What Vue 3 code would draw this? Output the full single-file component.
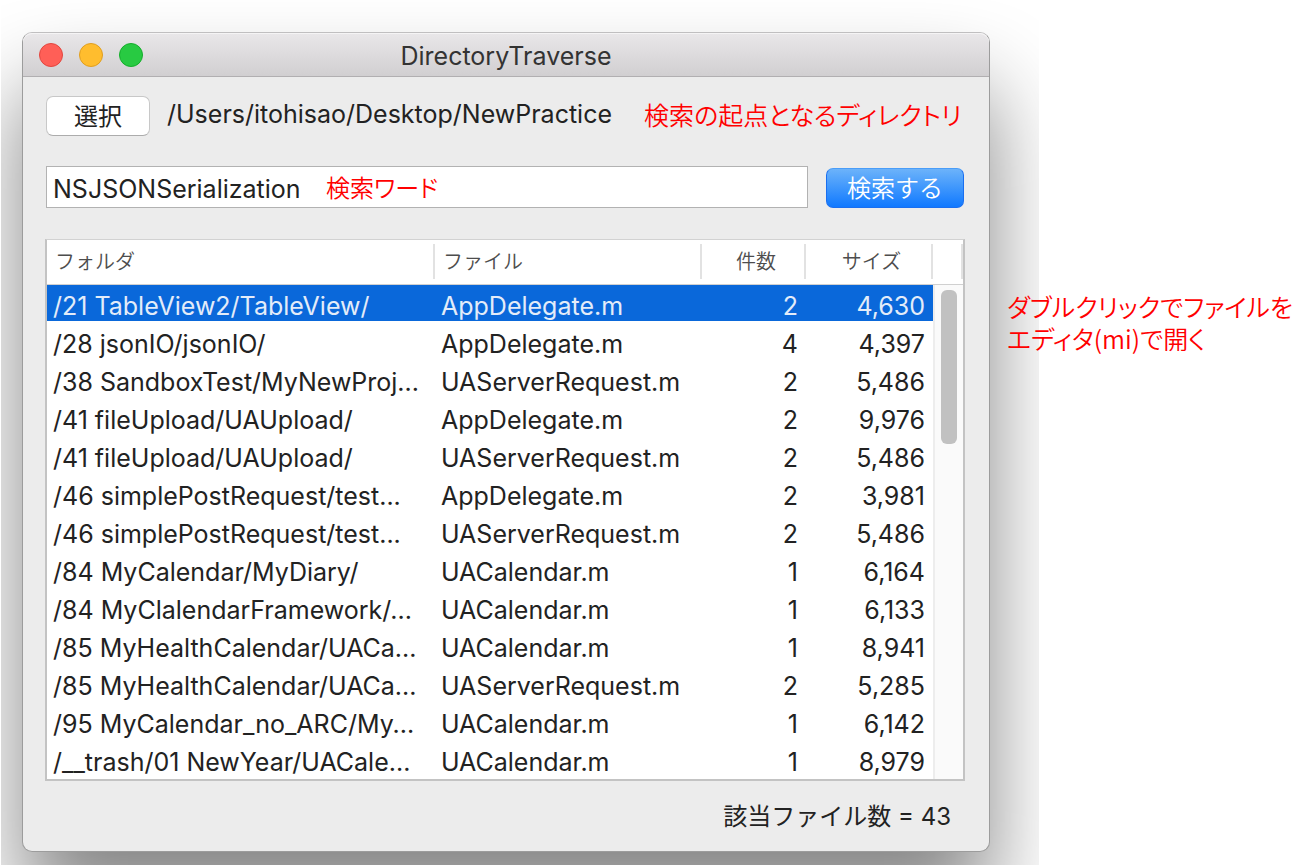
<script setup>
import { ref } from 'vue'

const keyword = ref('NSJSONSerialization')
const selected = ref(0)
const rows = [
  ['/21 TableView2/TableView/', 'AppDelegate.m', '2', '4,630'],
  ['/28 jsonIO/jsonIO/', 'AppDelegate.m', '4', '4,397'],
  ['/38 SandboxTest/MyNewProj...', 'UAServerRequest.m', '2', '5,486'],
  ['/41 fileUpload/UAUpload/', 'AppDelegate.m', '2', '9,976'],
  ['/41 fileUpload/UAUpload/', 'UAServerRequest.m', '2', '5,486'],
  ['/46 simplePostRequest/test...', 'AppDelegate.m', '2', '3,981'],
  ['/46 simplePostRequest/test...', 'UAServerRequest.m', '2', '5,486'],
  ['/84 MyCalendar/MyDiary/', 'UACalendar.m', '1', '6,164'],
  ['/84 MyClalendarFramework/...', 'UACalendar.m', '1', '6,133'],
  ['/85 MyHealthCalendar/UACa...', 'UACalendar.m', '1', '8,941'],
  ['/85 MyHealthCalendar/UACa...', 'UAServerRequest.m', '2', '5,285'],
  ['/95 MyCalendar_no_ARC/My...', 'UACalendar.m', '1', '6,142'],
  ['/__trash/01 NewYear/UACale...', 'UACalendar.m', '1', '8,979'],
]
</script>

<template>
  <div class="page">
    <div class="backdrop">
      <main class="window">
        <header class="titlebar">
          <div class="lights">
            <button class="light red" type="button" aria-label="閉じる"></button>
            <button class="light yellow" type="button" aria-label="しまう"></button>
            <button class="light green" type="button" aria-label="拡大"></button>
          </div>
          <h1>DirectoryTraverse</h1>
        </header>
        <div class="content">
          <div class="source">
            <button class="btn choose" type="button">選択</button>
            <span class="path">/Users/itohisao/Desktop/NewPractice</span>
            <span class="note">検索の起点となるディレクトリ</span>
          </div>
          <form class="search" @submit.prevent>
            <div class="field">
              <input id="keyword" v-model="keyword" type="text" />
              <label class="note hint" for="keyword">検索ワード</label>
            </div>
            <button class="btn primary" type="submit">検索する</button>
          </form>
          <div class="list">
            <table>
              <colgroup>
                <col />
                <col class="c-file" />
                <col class="c-count" />
                <col class="c-size" />
              </colgroup>
              <thead>
                <tr>
                  <th scope="col">フォルダ</th>
                  <th scope="col">ファイル</th>
                  <th scope="col" class="mid">件数</th>
                  <th scope="col" class="mid">サイズ</th>
                </tr>
              </thead>
              <tbody>
                <tr
                  v-for="(row, i) in rows"
                  :key="i"
                  :class="{ selected: i === selected }"
                  @click="selected = i"
                >
                  <td>{{ row[0] }}</td>
                  <td>{{ row[1] }}</td>
                  <td class="num">{{ row[2] }}</td>
                  <td class="num">{{ row[3] }}</td>
                </tr>
              </tbody>
            </table>
            <div class="scroll">
              <div class="corner"></div>
              <div class="track"><div class="thumb"></div></div>
            </div>
          </div>
          <p class="total">該当ファイル数 = 43</p>
        </div>
      </main>
    </div>
    <aside class="note side">ダブルクリックでファイルを<br />エディタ(mi)で開く</aside>
  </div>
</template>

<style>
body {
  background: #fff;
}
</style>

<style scoped>
* {
  box-sizing: border-box;
}
.page {
  display: grid;
  grid-template-columns: minmax(0, 1fr) 273px;
  min-height: 100vh;
  color: #222;
  font-family: Inter, "Noto Sans CJK JP", sans-serif;
  font-size: 25px;
}
.page button,
.page input {
  font: inherit;
  color: inherit;
}
.backdrop {
  margin-left: 1px;
  padding: 32px 49px 13px 21px;
  overflow: hidden;
}
.window {
  border: 1px solid #9c9c9c;
  border-top-color: #c0bfc0;
  border-radius: 10px;
  background: #ececec;
  box-shadow: 0 58px 88px rgba(0, 0, 0, 0.48);
}
.titlebar {
  display: grid;
  grid-template-columns: 120px 1fr 120px;
  align-items: center;
  height: 44px;
  padding: 0 4px;
  border-bottom: 1px solid #b1afb1;
  border-radius: 9px 9px 0 0;
  background: linear-gradient(#e9e7e9, #d1cfd1);
  box-shadow: inset 0 1px #f5f4f5;
}
.lights {
  display: flex;
  gap: 16px;
  padding-left: 12px;
}
.light {
  width: 24px;
  height: 24px;
  padding: 0;
  border: 1px solid;
  border-radius: 50%;
}
.red {
  background: #ff5f57;
  border-color: #e2463f;
}
.yellow {
  background: #ffbd2e;
  border-color: #e09e20;
}
.green {
  background: #28ca42;
  border-color: #14ae2b;
}
h1 {
  margin: 0;
  padding-top: 2px;
  font-size: 25px;
  font-weight: 400;
  line-height: 32px;
  text-align: center;
  color: #333;
}
.content {
  padding: 19px 25px 16px 23px;
}
.source {
  display: flex;
  align-items: center;
  height: 40px;
  white-space: nowrap;
}
.btn {
  height: 40px;
  padding: 0 0 4px;
  border-radius: 7px;
  line-height: 34px;
}
.page .btn {
  font-size: 24px;
}
.choose {
  width: 104px;
  margin-right: 17px;
  border: 1px solid #c8c8c8;
  border-bottom-color: #acacac;
  background: #fff;
}
.path {
  margin-right: 32px;
  line-height: 36px;
  padding-bottom: 4px;
}
.note {
  color: #f00;
  font-family: "Noto Sans CJK JP", sans-serif;
  font-feature-settings: "palt";
  font-size: 25px;
  font-weight: 350;
  line-height: 32px;
}
.source .note {
  padding-bottom: 4px;
}
.search {
  display: flex;
  align-items: flex-end;
  gap: 18px;
  margin-top: 30px;
}
.field {
  position: relative;
  flex: 1;
  height: 42px;
}
.field input {
  width: 100%;
  height: 100%;
  padding: 4px 6px 0;
  border: 1px solid #b2b2b2;
  background: #fff;
  outline: 0;
}
.hint {
  position: absolute;
  left: 280px;
  top: 5px;
  font-size: 24px;
}
.page .primary {
  width: 138px;
  border: 1px solid #1a6ff0;
  border-top-color: #4a9df8;
  background: linear-gradient(#6cb3fa, #1079ff);
  color: #fff;
  font-weight: 350;
}
.list {
  display: grid;
  grid-template-columns: minmax(0, 1fr) 30px;
  margin: 31px -1px 0;
  border: 2px solid #c3c3c3;
  border-top: 1px solid #d2d2d2;
  background: #fff;
}
table {
  width: 100%;
  table-layout: fixed;
  border-spacing: 0;
}
.c-file {
  width: 267px;
}
.c-count {
  width: 104px;
}
.c-size {
  width: 127px;
}
th,
.corner {
  height: 45px;
  border-bottom: 1px solid #d0d0d0;
  background: linear-gradient(#e2e2e2, #e2e2e2) right 4px / 2px 35px no-repeat;
}
th {
  padding: 0 8px;
  color: #4d4d4d;
  font-size: 20px;
  font-weight: 350;
  line-height: 32px;
  text-align: left;
}
th.mid {
  padding: 0 0 0 4px;
  text-align: center;
}
td {
  padding: 6px 8px 0 6px;
  border-bottom: 2px solid transparent;
  background-clip: padding-box;
  line-height: 30px;
  white-space: nowrap;
  overflow: hidden;
}
.num {
  text-align: right;
}
.selected td {
  background-color: #0a68da;
  color: #e3ecf9;
}
.scroll {
  display: flex;
  flex-direction: column;
}
.track {
  flex: 1;
  padding: 5px 6px;
  border-left: 2px solid #ededed;
  background: #fafafa;
}
.thumb {
  width: 16px;
  height: 154px;
  border-radius: 6px;
  background: #c1c1c1;
}
.total {
  margin: 17px 13px 0 0;
  font-size: 24px;
  line-height: 37px;
  text-align: right;
}
.side {
  z-index: 1;
  margin-left: -32px;
  padding-top: 290px;
  white-space: nowrap;
}
</style>
